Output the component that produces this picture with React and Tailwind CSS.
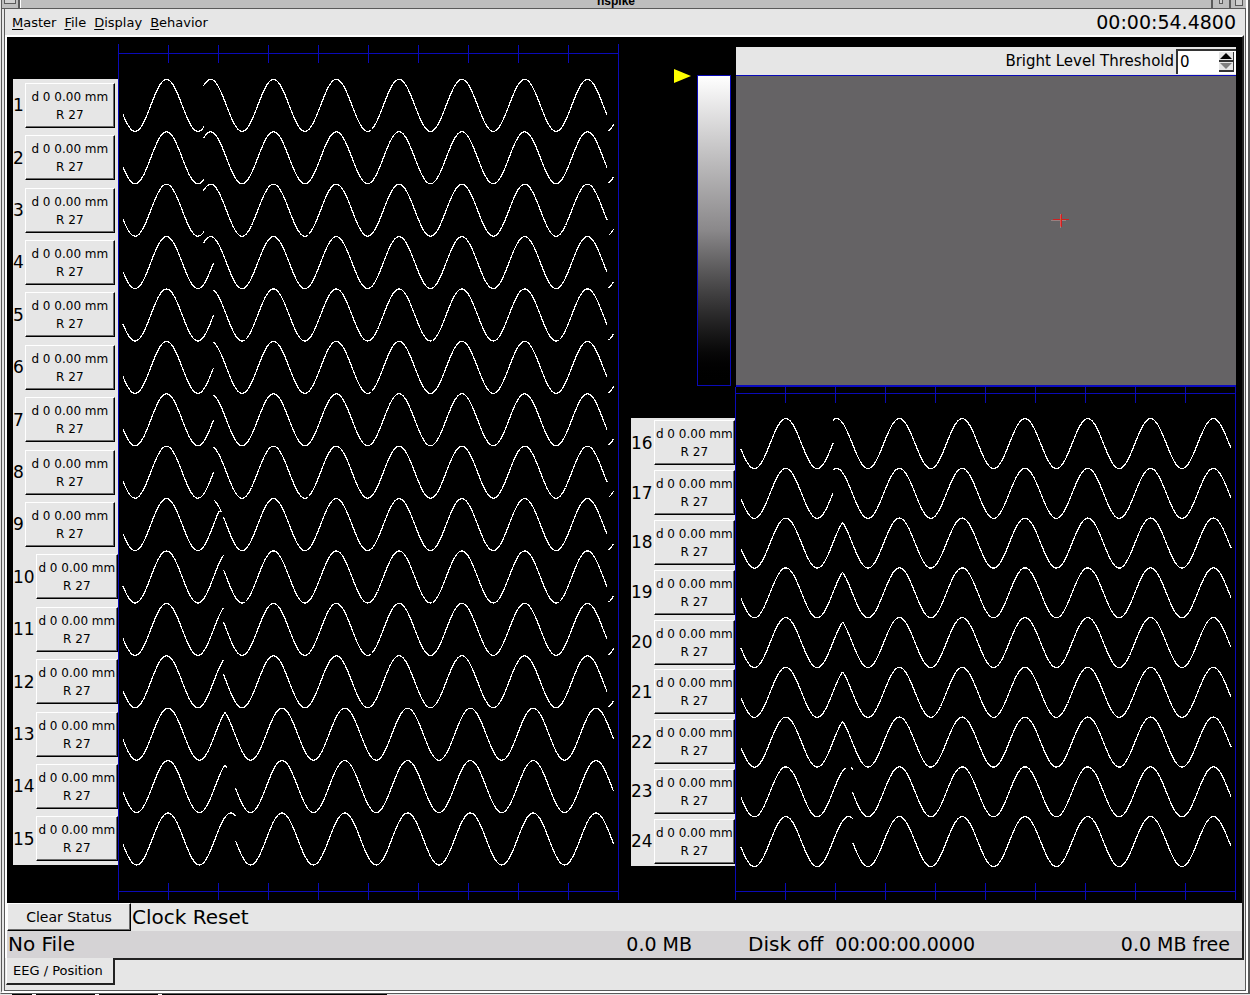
import React from 'react';

const PERIOD = 62.8;

// Each run is [from, to, x of a crest]; the sweep point splits a trace into runs.
const leftEarly = (aEnd, bStart, extra = []) => [
  [123, aEnd, 166.5],
  ...extra,
  [bStart, 607, 210.7],
  [608.5, 613.5, 637.4],
];
const leftLate = (aEnd, bStart, extra = []) => [
  [123, aEnd, 168],
  ...extra,
  [bStart, 613.5, 282],
];
const right = (aEnd, bStart, extra = []) => [
  [741, aEnd, 785.8],
  ...extra,
  [bStart, 1231, 899.4],
];

const LEFT = [
  leftEarly(204, 203.5),
  leftEarly(204, 203.5),
  leftEarly(204, 203.5),
  leftEarly(213.5, 203.5),
  leftEarly(213.5, 213.5),
  leftEarly(213.5, 213.5),
  leftEarly(213.5, 213.5),
  leftEarly(213.5, 213.5),
  leftEarly(219, 223.5, [[214, 221.5, 210.7]]),
  leftEarly(223.5, 223.5),
  leftEarly(223.5, 223.5),
  leftEarly(223.5, 223.5),
  leftLate(225, 225),
  leftLate(225, 235.5, [[225, 227, 219.2]]),
  leftLate(235.5, 235.5),
];

const RIGHT = [
  right(833, 833),
  right(833, 833),
  right(842.5, 842.5),
  right(842.5, 842.5),
  right(842.5, 842.5),
  right(842.5, 842.5),
  right(842.5, 842.5),
  right(845.5, 852.5, [[851, 853, 848.6]]),
  right(853, 853),
];

function runPath([from, to, crest], cy, amp) {
  const pts = [];
  for (let x = from; x < to; x += 1) pts.push(x);
  pts.push(to);
  return pts
    .map((x, i) => {
      const y = cy - amp * Math.cos((2 * Math.PI * (x - crest)) / PERIOD);
      return `${i ? 'L' : 'M'}${x.toFixed(1)} ${y.toFixed(1)}`;
    })
    .join('');
}

function Plot({ x, y, width, height, axisTop, axisBottom, first, pitch, amp, traces }) {
  const ticks = [];
  for (let t = x + 50; t < x + width - 10; t += 50) ticks.push(t + 0.5);
  const end = x + width - 0.5;
  return (
    <svg
      className="block h-full min-w-0 flex-1"
      viewBox={`${x} ${y} ${width} ${height}`}
      preserveAspectRatio="none"
      fill="none"
      shapeRendering="crispEdges"
      aria-label="EEG traces"
    >
      <g stroke="#0a0ab8">
        <path d={`M${x + 0.5} ${y}V${y + height}M${end} ${y}V${y + height}`} vectorEffect="non-scaling-stroke" />
        <path d={`M${x} ${axisTop}H${end}M${x} ${axisBottom}H${end}`} vectorEffect="non-scaling-stroke" />
        {ticks.map((t) => (
          <path
            key={t}
            d={`M${t} ${axisTop - 9}V${axisTop + 9}M${t} ${axisBottom - 9}V${axisBottom + 9}`}
            vectorEffect="non-scaling-stroke"
          />
        ))}
      </g>
      <g stroke="#ffffff" strokeWidth="1.2">
        {traces.map((runs, i) => (
          <path
            key={i}
            d={runs.map((r) => runPath(r, first + i * pitch, amp)).join('')}
            vectorEffect="non-scaling-stroke"
          />
        ))}
      </g>
    </svg>
  );
}

const raised =
  'border border-t-white border-l-white border-r-black border-b-black bg-[#e6e6e6] shadow-[inset_-1px_-1px_0_#6b6b6b]';

function Channels({ from, count }) {
  return (
    <div className="flex flex-1 flex-col bg-[#e6e6e6]">
      {Array.from({ length: count }, (_, i) => from + i).map((n) => (
        <div key={n} className="flex min-h-0 flex-1 items-center gap-px">
          <span className="text-[17px] leading-5">{n}</span>
          <button
            type="button"
            aria-label={`Channel ${n}`}
            className={`${raised} flex h-[45px] min-w-0 max-w-[90px] flex-1 flex-col items-center justify-center pt-px text-xs leading-[18px] whitespace-nowrap`}
          >
            <span>d 0 0.00 mm</span>
            <span>R 27</span>
          </button>
        </div>
      ))}
    </div>
  );
}

function TitleBar() {
  return (
    <div className="flex h-[9px] shrink-0 overflow-hidden border-b border-[#5a5a5a] bg-[#bebebe]">
      <div className="flex w-[18px] justify-center border-r-2 border-[#5a5a5a]">
        <span className="h-1 w-3 border border-t-0 border-[#5a5a5a] bg-[#d0d0d0]" />
      </div>
      <div className="flex flex-1 items-end justify-center border-l border-white pb-px">
        <span className="font-['Liberation_Sans',sans-serif] text-xs leading-3 font-bold">nspike</span>
      </div>
      <div className="flex w-[18px] justify-center border-l-2 border-[#5a5a5a]">
        <span className="h-1 w-1 border border-t-0 border-[#5a5a5a] bg-[#d0d0d0]" />
      </div>
      <div className="flex w-[17px] justify-center border-l-2 border-[#5a5a5a]">
        <span className="h-[6px] w-2 border border-t-0 border-[#5a5a5a] bg-[#d0d0d0]" />
      </div>
    </div>
  );
}

function MenuBar() {
  return (
    <header className="flex h-[26px] shrink-0 items-center justify-between pr-[9px] pl-[7px]">
      <nav className="flex gap-2 pt-px text-[13px] leading-5">
        {['Master', 'File', 'Display', 'Behavior'].map((m) => (
          <button key={m} type="button">
            <span className="underline underline-offset-2">{m[0]}</span>
            {m.slice(1)}
          </button>
        ))}
      </nav>
      <span className="text-[19px] leading-6">00:00:54.4800</span>
    </header>
  );
}

function Threshold() {
  return (
    <div className="flex h-7 shrink-0 items-center justify-end bg-[#e6e6e6]">
      <label htmlFor="threshold" className="pr-[2px] text-[15px] leading-5">
        Bright Level Threshold
      </label>
      <div className="flex h-[25px] w-[60px] items-center border-t-2 border-l-2 border-[#333333] bg-white pr-[2px]">
        <input
          id="threshold"
          type="text"
          defaultValue="0"
          className="min-w-0 flex-1 bg-transparent pl-[2px] text-[15px] leading-5 outline-none"
        />
        <div className="flex w-[15px] flex-col bg-[#e6e6e6]">
          <button type="button" aria-label="Increase" className="flex h-[10px] items-center justify-center border-r border-b-2 border-[#333333]">
            <svg width="12" height="6" viewBox="0 0 12 6"><path d="M6 0L12 6H0z" /></svg>
          </button>
          <button type="button" aria-label="Decrease" className="flex h-[10px] items-center justify-center border-r border-b-2 border-[#333333]">
            <svg width="12" height="6" viewBox="0 0 12 6"><path d="M0 0H12L6 6z" fill="#808080" /></svg>
          </button>
        </div>
      </div>
    </div>
  );
}

function Camera() {
  return (
    <div className="flex min-w-0 flex-1 flex-col">
      <Threshold />
      <div className="relative flex-1 border-t border-b-2 border-t-[#0a0ab8] border-b-[#0a0ac0] bg-[#656365]">
        <svg
          className="absolute top-[44%] left-[63%]"
          width="20"
          height="16"
          viewBox="0 0 20 16"
          shapeRendering="crispEdges"
          aria-label="Position marker"
        >
          <path d="M0 8.5H15M9.5 2V16" stroke="#9a8080" />
          <path d="M2 7.5H18M10.5 2V15" stroke="#d02020" />
          <path d="M9.5 3V14" stroke="#e05050" />
          <path d="M9 7H10V8H9z" fill="#8a9a20" />
        </svg>
      </div>
    </div>
  );
}

function Brightness() {
  return (
    <div className="flex w-[105px] shrink-0 justify-end gap-[6px] pt-[22px] pr-[5px] pb-px">
      <svg width="17" height="14" viewBox="0 0 17 14" aria-label="Threshold marker">
        <path d="M0 0L17 7L0 14z" fill="#ffff00" />
      </svg>
      <div className="mt-[6px] w-[34px] border border-[#0a0ab8] bg-linear-to-b from-white via-[#8a888a] to-black" />
    </div>
  );
}

function StatusArea() {
  return (
    <footer className="shrink-0 text-[19px]">
      <div className="flex h-7 items-center">
        <button type="button" className={`${raised} h-full w-[124px] text-sm`}>
          Clear Status
        </button>
        <span className="pl-px text-xl leading-6">Clock Reset</span>
      </div>
      <div className="grid h-[27px] grid-cols-[686fr_549fr] items-center bg-[#d5d3d5] pb-[2px] leading-6">
        <div className="flex justify-between pr-px pl-px">
          <span className="text-xl leading-6">No File</span>
          <span>0.0 MB</span>
        </div>
        <div className="flex justify-between pr-3 pl-[55px]">
          <div className="flex gap-3">
            <span className="text-xl leading-6">Disk off</span>
            <span>00:00:00.0000</span>
          </div>
          <span>0.0 MB free</span>
        </div>
      </div>
    </footer>
  );
}

export default function App() {
  return (
    <div className="flex h-screen min-h-[800px] flex-col bg-[#e6e6e6] font-['DejaVu_Sans',sans-serif] text-black">
      <div className="flex min-h-0 flex-1 flex-col border-r-2 border-b border-l border-[#5a5a5a] border-l-[#e6e6e6]">
        <div className="flex min-h-0 flex-1 flex-col border-r-2 border-b-2 border-l border-r-white border-b-white border-l-[#5a5a5a]">
          <TitleBar />
          <div className="ml-[2px] flex min-h-0 flex-1 flex-col border-r border-b border-l border-[#5a5a5a]">
            <MenuBar />
            <div className="mr-px flex min-h-0 flex-1 flex-col border-t-2 border-r-2 border-l-2 border-white border-r-[#222222]">
              <main className="grid min-h-0 flex-1 grid-cols-[606fr_605fr] gap-3 bg-black pr-[6px] pb-[3px] pl-[6px]">
                <section className="flex min-h-0 min-w-0 pt-[7px]">
                  <div className="flex w-[105px] shrink-0 flex-col pt-[35px] pb-[35px]">
                    <Channels from={1} count={15} />
                  </div>
                  <Plot
                    x={118}
                    y={44}
                    width={501}
                    height={856}
                    axisTop={53.5}
                    axisBottom={891.5}
                    first={105.4}
                    pitch={52.4}
                    amp={26}
                    traces={LEFT}
                  />
                </section>
                <section className="flex min-h-0 min-w-0 flex-col pt-[10px]">
                  <div className="flex h-[340px] shrink-0">
                    <Brightness />
                    <Camera />
                  </div>
                  <div className="flex min-h-0 flex-1">
                    <div className="flex w-[104px] shrink-0 flex-col pt-[31px] pb-[34px]">
                      <Channels from={16} count={9} />
                    </div>
                    <Plot
                      x={735}
                      y={387}
                      width={501}
                      height={513}
                      axisTop={393.5}
                      axisBottom={891.5}
                      first={443.6}
                      pitch={49.75}
                      amp={25}
                      traces={RIGHT}
                    />
                  </div>
                </section>
              </main>
              <StatusArea />
            </div>
            <div className="flex h-8 shrink-0 pr-px pl-px">
              <button
                type="button"
                className="h-[27px] w-[109px] border-r-2 border-b-2 border-l border-[#222222] border-l-white pl-[6px] text-left text-[13px]"
              >
                EEG / Position
              </button>
              <div className="flex-1 border-t-2 border-[#222222]" />
            </div>
          </div>
        </div>
      </div>
      <div className="flex h-px shrink-0">
        <div className="w-3" />
        <div className="w-5 bg-black" />
        <div className="w-1 bg-white" />
        <div className="w-[59px] bg-black" />
        <div className="w-1 bg-white" />
        <div className="w-[59px] bg-black" />
        <div className="w-1 bg-white" />
        <div className="w-[225px] bg-black" />
      </div>
    </div>
  );
}
